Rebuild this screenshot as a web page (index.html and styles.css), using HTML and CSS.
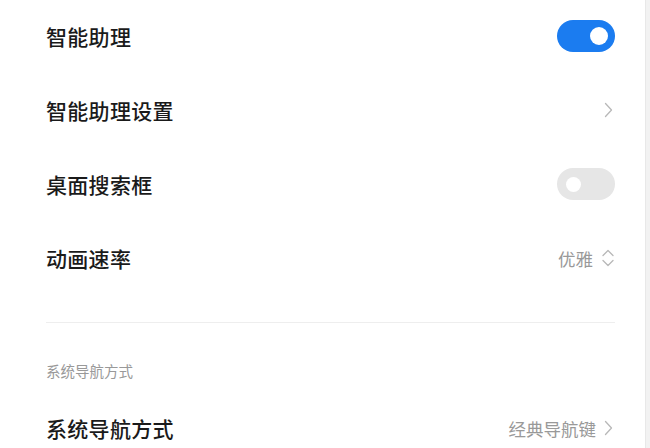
FILE: index.html
```html
<!DOCTYPE html>
<html lang="zh-CN">
<head>
    <meta charset="UTF-8">
    <meta name="viewport" content="width=device-width, initial-scale=1.0">
    <title>更多设置</title>
    <link rel="stylesheet" href="styles.css">
</head>
<body>
    <div class="screen">
        <div class="settings">
            <!-- 助理 -->
            <div class="row row-first">
                <span class="label">智能助理</span>
                <span class="switch switch-on"><span class="knob"></span></span>
            </div>
            <div class="row">
                <span class="label">智能助理设置</span>
                <span class="extra">
                    <svg class="chevron" width="9" height="16" viewBox="0 0 9 16"><path d="M1.5 1.5 L7.5 8 L1.5 14.5" fill="none" stroke="#b8b8b8" stroke-width="1.3" stroke-linecap="round" stroke-linejoin="round"/></svg>
                </span>
            </div>
            <div class="row">
                <span class="label">桌面搜索框</span>
                <span class="switch"><span class="knob"></span></span>
            </div>
            <div class="row">
                <span class="label">动画速率</span>
                <span class="extra">
                    <span class="value">优雅</span>
                    <svg class="updown" width="14" height="20" viewBox="0 0 14 20"><path d="M2 7.5 L7 2.5 L12 7.5 M2 12.5 L7 17.5 L12 12.5" fill="none" stroke="#b8b8b8" stroke-width="1.3" stroke-linecap="round" stroke-linejoin="round"/></svg>
                </span>
            </div>

            <div class="divider"></div>

            <!-- 导航 -->
            <div class="group-title">系统导航方式</div>
            <div class="row">
                <span class="label">系统导航方式</span>
                <span class="extra">
                    <span class="value">经典导航键</span>
                    <svg class="chevron" width="9" height="16" viewBox="0 0 9 16"><path d="M1.5 1.5 L7.5 8 L1.5 14.5" fill="none" stroke="#b8b8b8" stroke-width="1.3" stroke-linecap="round" stroke-linejoin="round"/></svg>
                </span>
            </div>
        </div>
        <div class="edge"></div>
    </div>
</body>
</html>
```

FILE: styles.css
```css
* {
    margin: 0;
    padding: 0;
    box-sizing: border-box;
    font-family: "Noto Sans CJK SC", "Noto Sans", sans-serif;
}

body {
    background: #fff;
    color: #1a1a1a;
    overflow: hidden;
}

.screen {
    display: flex;
    height: 448px;
}

.settings {
    flex: 1;
    padding: 0 30px 0 46px;
}

.edge {
    width: 5px;
    background: #f2f2f2;
    border-left: 1px solid #e8e8e8;
}

.row {
    height: 74px;
    display: flex;
    align-items: center;
    justify-content: space-between;
}

.row-first {
    height: 72px;
    margin-bottom: 1px;
}

.label {
    font-size: 21px;
    font-weight: 500;
    letter-spacing: 0.3px;
}

.extra {
    display: flex;
    align-items: center;
    gap: 8px;
}

.value {
    font-size: 17.5px;
    color: #999;
}

.chevron {
    margin-right: 2px;
}

.switch {
    width: 58px;
    height: 32px;
    border-radius: 16px;
    background: #e6e6e6;
    display: flex;
    align-items: center;
    padding: 0 9px;
}

.switch .knob {
    width: 15px;
    height: 15px;
    border-radius: 50%;
    background: #fff;
}

.switch-on {
    background: #1b7cf0;
    justify-content: flex-end;
    padding: 0 7px;
}

.switch-on .knob {
    width: 18px;
    height: 18px;
}

.divider {
    height: 1px;
    background: #eeeeee;
    margin-top: 27px;
}

.group-title {
    font-size: 14.5px;
    color: #999;
    line-height: 20px;
    margin: 38px 0 10px;
}
```
